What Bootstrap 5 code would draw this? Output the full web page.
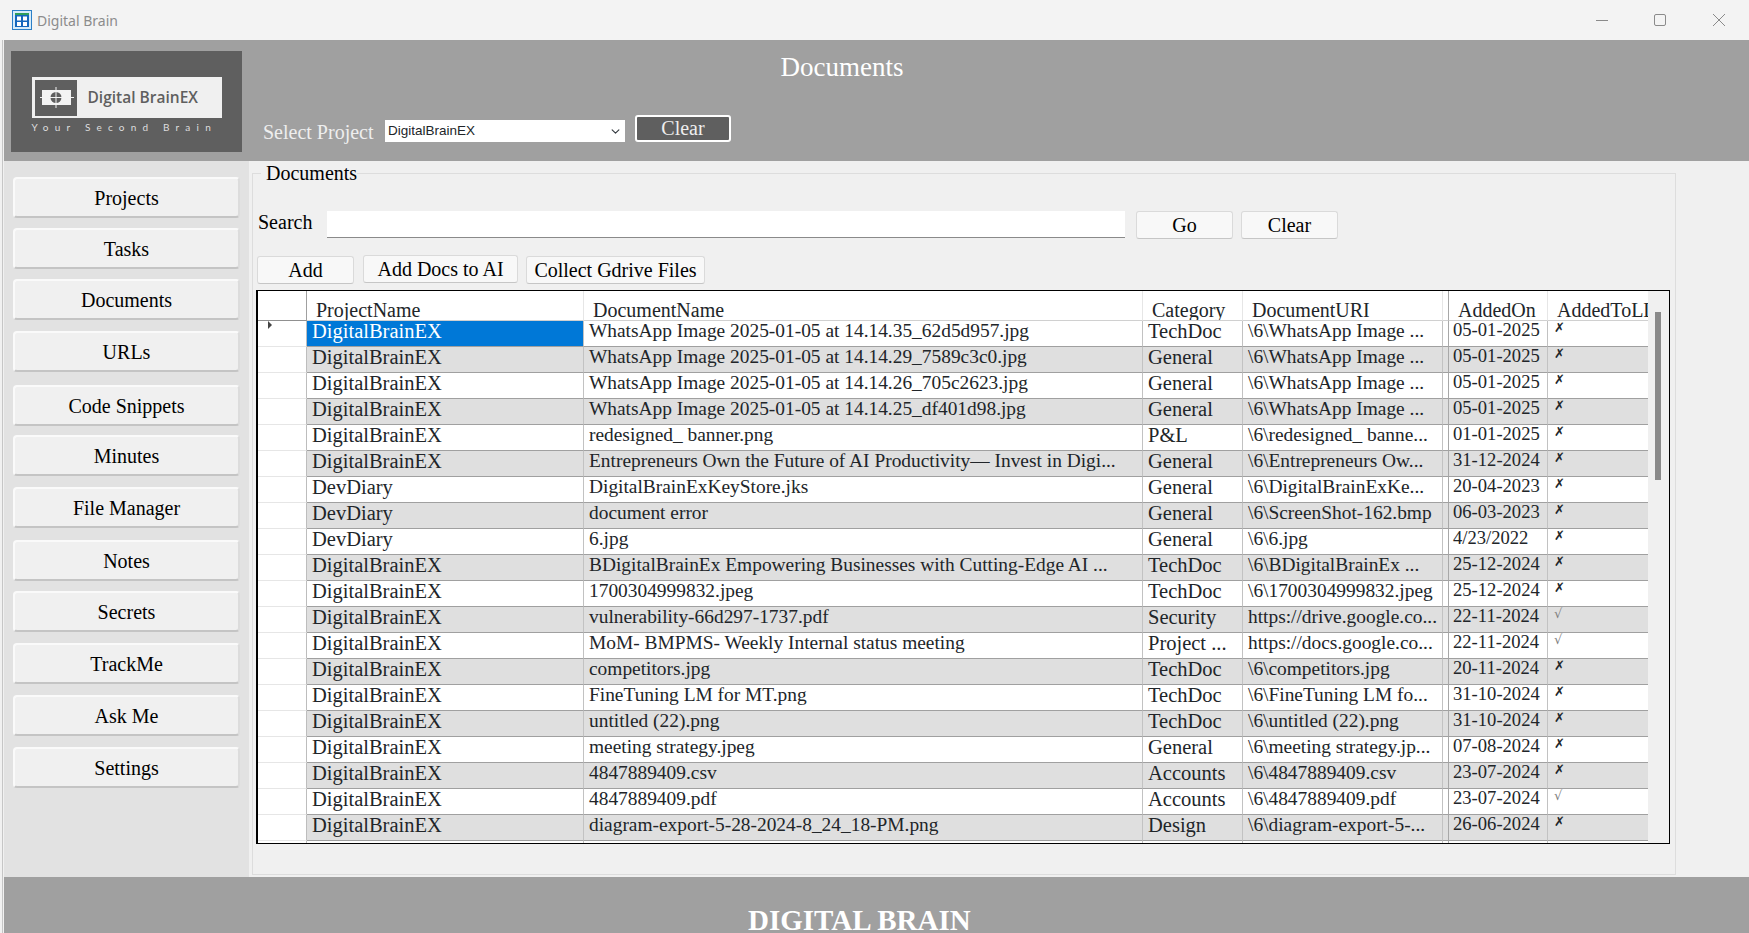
<!DOCTYPE html>
<html lang="en">
<head>
  <meta charset="UTF-8" />
  <meta name="viewport" content="width=device-width, initial-scale=1" />
  <title>Digital Brain</title>
  <link href="https://cdn.jsdelivr.net/npm/bootstrap@5.3.3/dist/css/bootstrap.min.css" rel="stylesheet" />
  <style>
    html, body { height: 933px; overflow: hidden; }
    body { background-color: #f1f1f1; font-family: "Liberation Serif", serif; color: #000; }
    .title-bar { height: 40px; padding-left: 12px; background-color: #f3f3f3; }
    .title-text { font-family: "Noto Sans", sans-serif; font-size: 14px; color: #8c8c8c; margin-left: 5px; }
    .win-ctrl { width: 59px; }
    .frame { height: 893px; margin-left: 2px; border-left: 1px solid #c6c6c6; padding-left: 1px; }
    .top-head { height: 121px; background-color: #a0a0a0; }
    .logo-box { width: 231px; height: 101px; margin: 11px 0 0 7px; background-color: #5f5f5f; }
    .logo-plate { width: 190px; height: 41px; margin-top: 26px; padding: 2px 3px; background-color: #f0f0f0; }
    .logo-name { margin-left: 11px; font-family: "Open Sans", sans-serif; font-weight: 600; font-size: 15.5px; color: #5f5f5f; white-space: nowrap; }
    .logo-tag { width: 190px; margin-top: 3px; font-family: "Lato", sans-serif; font-size: 10px; line-height: 13px; letter-spacing: 6.2px; color: #dedede; white-space: nowrap; }
    .head-side { width: 1200px; }
    .head-title { padding-top: 12px; font-size: 27px; line-height: 30px; color: #fff; text-align: center; }
    .project-row { margin: 33px 0 0 21px; }
    .project-label { width: 122px; font-size: 20px; line-height: 22px; color: #eee; white-space: nowrap; padding-top: 6px; }
    .project-select { width: 240px; height: 22px; padding: 0 0 0 3px; border: 0; border-radius: 0; font-family: "Liberation Sans", sans-serif; font-size: 13.5px; line-height: 20px; background-size: 11px 9px; background-position: right 4px center; margin-top: 5px; }
    .clear-dark { width: 96px; height: 27px; margin-left: 10px; padding: 0; border: 2px solid #fff; border-radius: 3px; background-color: #5f5f5f; color: #eee; font-size: 20px; line-height: 21px; }
    .middle { height: 716px; }
    .side-menu { width: 245px; padding: 16px 9px 0 9px; background-color: #e2e2e2; }
    .side-btn { display: block; width: 227px; height: 41px; padding: 0; border: 2px solid #fafafa; border-bottom-color: #c4c4c4; border-right-color: #dcdcdc; border-radius: 4px; background-color: #f0f0f0; color: #000; font-size: 20px; line-height: 34px; margin-bottom: 10px; }
    .side-btn:nth-child(3) { margin-bottom: 11px; }
    .side-btn:nth-child(4) { margin-bottom: 13px; }
    .side-btn:nth-child(5) { margin-bottom: 9px; }
    .side-btn:nth-child(6) { margin-bottom: 11px; }
    .side-btn:nth-child(7) { margin-bottom: 12px; }
    .side-btn:nth-child(9), .side-btn:nth-child(10), .side-btn:nth-child(11) { margin-bottom: 11px; }
    .main-area { background-color: #f0f0f0; padding-left: 3px; }
    .doc-group { width: 1424px; height: 714px; padding: 0 0 0 3px; border: 1px solid #dddddd; margin-top: 0; }
    .doc-group legend { float: none; width: auto; margin: 0 0 0 5px; padding: 0 0 0 5px; font-size: 20px; line-height: 24px; }
    .search-row { margin-top: 26px; height: 28px; }
    .search-label { width: 71px; padding-left: 2px; font-size: 20px; line-height: 22px; }
    .search-input { width: 798px; height: 27px; border: 0; border-bottom: 1px solid #8a8a8a; border-radius: 0; padding: 0 4px; }
    .plain-btn { height: 28px; padding: 0; border: 1px solid #dadada; border-bottom-color: #c6c6c6; border-radius: 3px; background-color: #f8f8f8; color: #000; font-size: 20px; line-height: 24px; white-space: nowrap; }
    .go-btn { width: 97px; margin-left: 11px; }
    .clear-btn { width: 97px; margin-left: 8px; }
    .action-row { margin: 17px 0 0 1px; height: 28px; }
    .add-btn { width: 97px; }
    .ai-btn { width: 155px; margin-left: 9px; margin-top: -1px; }
    .gdrive-btn { width: 179px; margin-left: 8px; }
    .grid-box { width: 1414px; height: 554px; margin-top: 6px; border: 1px solid #000; border-left-width: 2px; background-color: #f0f0f0; }
    .grid-clip { width: 1391px; overflow: hidden; }
    .doc-grid { width: 1391px; margin: 0; table-layout: fixed; border-collapse: separate; border-spacing: 0; background-color: #fff; }
    .doc-grid th, .doc-grid td { padding: 0 4px 0 5px; border: 0; line-height: 1; white-space: nowrap; overflow: hidden; box-shadow: none; }
    .doc-grid th { height: 30px; padding-left: 9px; font-size: 20px; font-weight: 400; border-right: 1px solid #e6e6e6; border-bottom: 1px solid #d0d0d0; background-color: #fff; }
    .doc-grid td { height: 26px; font-size: 20.5px; border-right: 1px solid #c2c2c2; border-bottom: 1px solid #a0a0a0; background-color: #fff; }
    .doc-grid tr.alt td { background-color: #dfdfdf; }
    .doc-grid td.row-head, .doc-grid tr.alt td.row-head { padding: 0 0 0 10px; background-color: #fff; border-right: 1px solid #bdbdbd; border-bottom: 1px solid #e6e6e6; }
    .doc-grid th.row-head { border-right-color: #a0a0a0; border-bottom-color: #909090; }
    .doc-grid td.picked { background-color: #0078d7; color: #fff; }
    .doc-grid td.spacer, .doc-grid th.spacer { padding: 0; border-right-color: #a8a8a8; }
    .doc-grid td.date-cell { font-size: 18.6px; padding-left: 4px; }
    .doc-grid td.name-cell { font-size: 19.4px; }
    .doc-grid td.mark-cell { padding-left: 6px; font-family: "DejaVu Sans", sans-serif; font-size: 13px; border-right: 0; }
    .doc-grid td.mark-on { color: #808080; }
    .row-arrow { display: block; width: 0; height: 0; border-top: 4px solid transparent; border-bottom: 4px solid transparent; border-left: 4px solid #444; }
    .scroll-track { width: 21px; }
    .scroll-thumb { width: 6px; height: 168px; margin: 21px 0 0 7px; background-color: #8a8a8a; }
    .foot-bar { height: 56px; background-color: #a0a0a0; color: #fff; overflow: hidden; }
    .foot-text { margin: 27px 0 0 744px; font-size: 29px; font-weight: 700; line-height: 32px; white-space: nowrap; }
  </style>
</head>
<body>
  <div class="title-bar d-flex align-items-center">
    <svg width="20" height="20" viewBox="0 0 20 20">
      <rect x="0.5" y="0.5" width="19" height="19" fill="#d6ecfa" stroke="#2b7fc7"/>
      <rect x="3" y="3" width="14" height="14" fill="#1467bd"/>
      <rect x="3" y="3" width="14" height="2" fill="#2e9e5b"/>
      <path d="M5 6.5h4v4H5zM11 6.5h4v4h-4zM5 12h4v4H5zM11 12h4v4h-4z" fill="#fff"/>
    </svg>
    <span class="title-text">Digital Brain</span>
    <div class="ms-auto d-flex">
      <svg class="win-ctrl" height="14" viewBox="0 0 59 14"><path d="M24 7.5h12" stroke="#8a8a8a" stroke-width="1"/></svg>
      <svg class="win-ctrl" height="14" viewBox="0 0 59 14"><rect x="23.5" y="1.5" width="11" height="11" rx="1.5" fill="none" stroke="#8a8a8a"/></svg>
      <svg class="win-ctrl" height="14" viewBox="0 0 59 14"><path d="M23 1l12 12M35 1L23 13" stroke="#8a8a8a" stroke-width="1" fill="none"/></svg>
    </div>
  </div>

  <div class="frame d-flex flex-column">
    <div class="top-head d-flex">
      <div class="logo-box d-flex flex-column align-items-center">
        <div class="logo-plate d-flex align-items-center">
          <svg width="42" height="36" viewBox="0 0 42 36" class="flex-shrink-0">
            <rect width="42" height="36" fill="#5f5f5f"/>
            <rect x="7" y="10" width="29" height="15" fill="#f4f4f4"/>
            <circle cx="21" cy="17.5" r="5.5" fill="#5f5f5f"/>
            <path d="M21 7v21M5 17.5h34" stroke="#f4f4f4" stroke-width="1"/>
          </svg>
          <span class="logo-name">Digital BrainEX</span>
        </div>
        <div class="logo-tag">Your Second Brain</div>
      </div>
      <div class="head-side">
        <div class="head-title">Documents</div>
        <div class="project-row d-flex">
          <div class="project-label">Select Project</div>
          <select class="form-select project-select"><option>DigitalBrainEX</option></select>
          <button type="button" class="btn clear-dark">Clear</button>
        </div>
      </div>
    </div>

    <div class="middle d-flex">
      <div class="side-menu" id="sideMenu"></div>
      <div class="main-area flex-grow-1">
        <fieldset class="doc-group">
          <legend>Documents</legend>
          <div class="search-row d-flex">
            <label class="search-label" for="searchBox">Search</label>
            <input type="text" class="form-control search-input" id="searchBox" />
            <button type="button" class="btn plain-btn go-btn">Go</button>
            <button type="button" class="btn plain-btn clear-btn">Clear</button>
          </div>
          <div class="action-row d-flex">
            <button type="button" class="btn plain-btn add-btn">Add</button>
            <button type="button" class="btn plain-btn ai-btn">Add Docs to AI</button>
            <button type="button" class="btn plain-btn gdrive-btn">Collect Gdrive Files</button>
          </div>
          <div class="grid-box d-flex">
            <div class="grid-clip">
              <table class="table doc-grid">
                <colgroup>
                  <col style="width:49px"><col style="width:277px"><col style="width:559px"><col style="width:100px"><col style="width:200px"><col style="width:6px"><col style="width:99px"><col style="width:101px">
                </colgroup>
                <thead>
                  <tr>
                    <th class="row-head"></th>
                    <th>ProjectName</th>
                    <th>DocumentName</th>
                    <th>Category</th>
                    <th>DocumentURI</th>
                    <th class="spacer"></th>
                    <th>AddedOn</th>
                    <th>AddedToLLM</th>
                  </tr>
                </thead>
                <tbody id="gridBody"></tbody>
              </table>
            </div>
            <div class="scroll-track"><div class="scroll-thumb"></div></div>
          </div>
        </fieldset>
      </div>
    </div>

    <div class="foot-bar"><div class="foot-text">DIGITAL BRAIN</div></div>
  </div>

  <script>
    const menu = ["Projects", "Tasks", "Documents", "URLs", "Code Snippets", "Minutes", "File Manager", "Notes", "Secrets", "TrackMe", "Ask Me", "Settings"];
    document.getElementById("sideMenu").innerHTML = menu.map(m => `<button type="button" class="btn side-btn">${m}</button>`).join("");

    const db = "DigitalBrainEX", dd = "DevDiary";
    const rows = [
      [db, "WhatsApp Image 2025-01-05 at 14.14.35_62d5d957.jpg", "TechDoc", "\\6\\WhatsApp Image ...", "05-01-2025", 0],
      [db, "WhatsApp Image 2025-01-05 at 14.14.29_7589c3c0.jpg", "General", "\\6\\WhatsApp Image ...", "05-01-2025", 0],
      [db, "WhatsApp Image 2025-01-05 at 14.14.26_705c2623.jpg", "General", "\\6\\WhatsApp Image ...", "05-01-2025", 0],
      [db, "WhatsApp Image 2025-01-05 at 14.14.25_df401d98.jpg", "General", "\\6\\WhatsApp Image ...", "05-01-2025", 0],
      [db, "redesigned_ banner.png", "P&amp;L", "\\6\\redesigned_ banne...", "01-01-2025", 0],
      [db, "Entrepreneurs Own the Future of AI Productivity— Invest in Digi...", "General", "\\6\\Entrepreneurs Ow...", "31-12-2024", 0],
      [dd, "DigitalBrainExKeyStore.jks", "General", "\\6\\DigitalBrainExKe...", "20-04-2023", 0],
      [dd, "document error", "General", "\\6\\ScreenShot-162.bmp", "06-03-2023", 0],
      [dd, "6.jpg", "General", "\\6\\6.jpg", "4/23/2022", 0],
      [db, "BDigitalBrainEx Empowering Businesses with Cutting-Edge AI ...", "TechDoc", "\\6\\BDigitalBrainEx ...", "25-12-2024", 0],
      [db, "1700304999832.jpeg", "TechDoc", "\\6\\1700304999832.jpeg", "25-12-2024", 0],
      [db, "vulnerability-66d297-1737.pdf", "Security", "https://drive.google.co...", "22-11-2024", 1],
      [db, "MoM- BMPMS- Weekly Internal  status meeting", "Project ...", "https://docs.google.co...", "22-11-2024", 1],
      [db, "competitors.jpg", "TechDoc", "\\6\\competitors.jpg", "20-11-2024", 0],
      [db, "FineTuning LM for MT.png", "TechDoc", "\\6\\FineTuning LM fo...", "31-10-2024", 0],
      [db, "untitled (22).png", "TechDoc", "\\6\\untitled (22).png", "31-10-2024", 0],
      [db, "meeting strategy.jpeg", "General", "\\6\\meeting strategy.jp...", "07-08-2024", 0],
      [db, "4847889409.csv", "Accounts", "\\6\\4847889409.csv", "23-07-2024", 0],
      [db, "4847889409.pdf", "Accounts", "\\6\\4847889409.pdf", "23-07-2024", 1],
      [db, "diagram-export-5-28-2024-8_24_18-PM.png", "Design", "\\6\\diagram-export-5-...", "26-06-2024", 0],
      ["", "", "", "", "", 2]
    ];
    document.getElementById("gridBody").innerHTML = rows.map((r, i) => `
      <tr class="${i % 2 ? "alt" : ""}">
        <td class="row-head">${i === 0 ? '<span class="row-arrow"></span>' : ""}</td>
        <td class="${i === 0 ? "picked" : ""}">${r[0]}</td>
        <td class="name-cell">${r[1]}</td>
        <td>${r[2]}</td>
        <td class="name-cell">${r[3]}</td>
        <td class="spacer"></td>
        <td class="date-cell">${r[4]}</td>
        <td class="mark-cell ${r[5] === 1 ? "mark-on" : ""}">${r[5] === 1 ? "√" : r[5] === 0 ? "✗" : ""}</td>
      </tr>`).join("");
  </script>
  <script src="https://cdn.jsdelivr.net/npm/bootstrap@5.3.3/dist/js/bootstrap.bundle.min.js"></script>
</body>
</html>
